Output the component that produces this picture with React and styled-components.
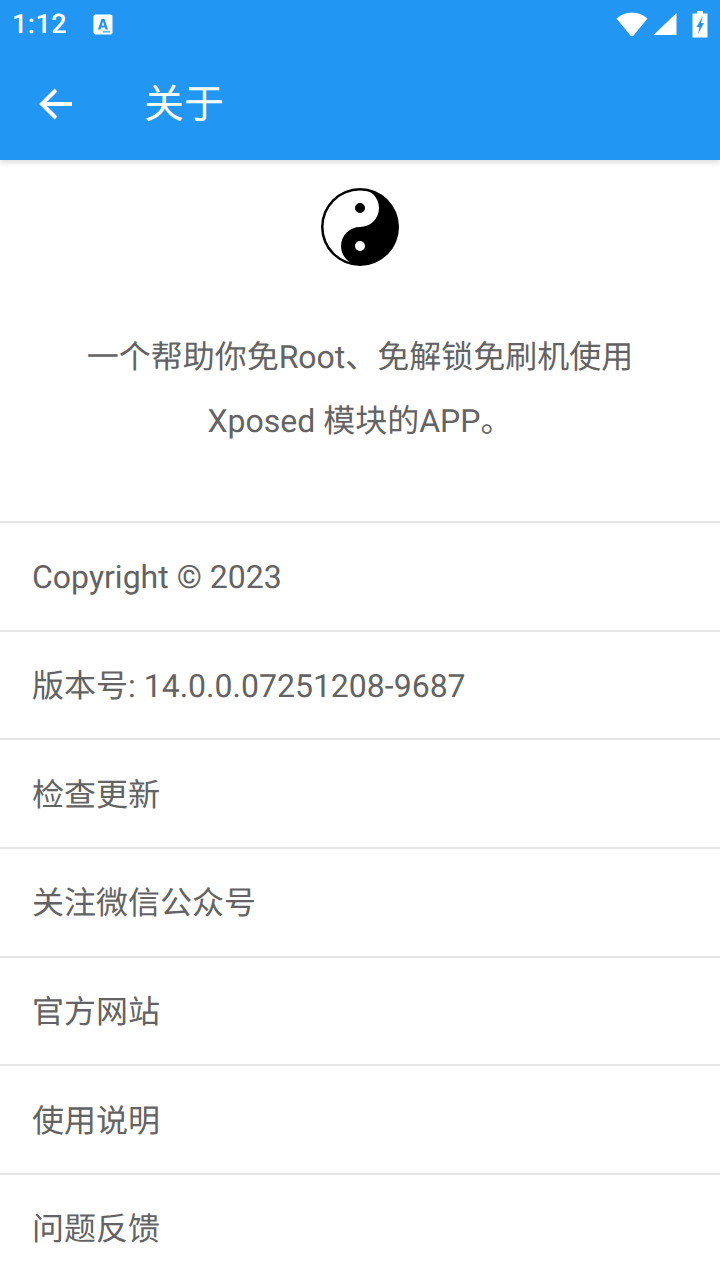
import styled, { createGlobalStyle } from "styled-components";

const GlobalStyle = createGlobalStyle`
  html, body {
    margin: 0;
    padding: 0;
    background: #fff;
    overflow: hidden;
  }
  body {
    font-family: Roboto, "Noto Sans CJK SC", sans-serif;
    text-rendering: geometricPrecision;
  }
`;

const rows = [
  "Copyright © 2023",
  "版本号: 14.0.0.07251208-9687",
  "检查更新",
  "关注微信公众号",
  "官方网站",
  "使用说明",
  "问题反馈",
];

const Page = styled.div`
  width: 720px;
  height: 1280px;
  overflow: hidden;
  background: #fff;
`;

const Header = styled.header`
  background: #2196f3;
  box-shadow: 0 2px 6px rgba(0, 0, 0, 0.16);
  position: relative;
`;

const StatusBar = styled.div`
  height: 48px;
  display: flex;
  align-items: center;
  padding: 0 12px;
  color: #fff;
`;

const Clock = styled.span`
  font-size: 27px;
  line-height: 48px;
  font-weight: 500;
  letter-spacing: 0.5px;
`;

const StatusRight = styled.div`
  margin-left: auto;
  display: flex;
  align-items: center;
`;

const Toolbar = styled.div`
  height: 112px;
  display: flex;
  align-items: center;
  color: #fff;
`;

const BackButton = styled.button`
  width: 112px;
  height: 112px;
  padding: 0;
  border: 0;
  background: none;
  display: flex;
  align-items: center;
  justify-content: center;
`;

const Title = styled.h1`
  margin: 2px 0 0 32px;
  font-size: 40px;
  line-height: 56px;
  font-weight: 400;
  color: #fff;
`;

const Intro = styled.section`
  height: 361px;
  padding-top: 27px;
  box-sizing: border-box;
  display: flex;
  flex-direction: column;
  align-items: center;
`;

const Description = styled.p`
  margin: 58px 0 0;
  width: 580px;
  font-size: 32px;
  line-height: 64px;
  color: #636363;
  text-align: center;
`;

const Row = styled.div`
  height: 108.67px;
  box-sizing: border-box;
  border-top: 2px solid #e6e6e6;
  padding: 2px 0 0 32px;
  display: flex;
  align-items: center;
  font-size: 32px;
  line-height: 40px;
  color: #636363;
`;

const NotificationIcon = () => (
  <svg width="20" height="21" viewBox="0 0 20 21" style={{ marginLeft: 26 }}>
    <rect x="0.5" y="0.5" width="19" height="20" rx="2" fill="#fff" />
    <path d="M8.4 5 H11.6 L15 15.5 H12.5 L11.9 13.5 H8.1 L7.5 15.5 H5 Z M8.7 11.4 H11.3 L10 7.5 Z" fill="#2196f3" fillRule="evenodd" />
    <rect x="10" y="16.8" width="7" height="1.8" fill="#2196f3" opacity="0.7" />
  </svg>
);

const WifiIcon = () => (
  <svg width="32" height="25" viewBox="0 0 32 25">
    <path d="M0.5 6.5 C9 -1.5 23 -1.5 31.5 6.5 L17.5 23.5 Q16 25 14.5 23.5 Z" fill="#fff" />
  </svg>
);

const SignalIcon = () => (
  <svg width="24" height="24" viewBox="0 0 24 24" style={{ marginLeft: 5 }}>
    <path d="M23.5 1 V23 H0.5 Z" fill="#fff" />
  </svg>
);

const BatteryIcon = () => (
  <svg width="16" height="27" viewBox="0 0 16 27" style={{ marginLeft: 15 }}>
    <path d="M5 0 H11 V2.5 H15.5 V26.5 H0.5 V2.5 H5 Z" fill="#fff" />
    <path d="M11 5 L4.5 16 H7.5 L6 23 L12 12 H9 Z" fill="#2196f3" />
  </svg>
);

const BackIcon = () => (
  <svg width="34" height="32" viewBox="0 0 34 32" fill="none" stroke="#fff" strokeWidth="4">
    <path d="M33 16 H3" />
    <path d="M17 2 L3 16 L17 30" />
  </svg>
);

const TaijiLogo = () => (
  <svg width="80" height="80" viewBox="0 0 80 80">
    <circle cx="40" cy="40" r="39" fill="#000" />
    <circle cx="40" cy="40" r="36.5" fill="#fff" />
    <path d="M40 2 A38 38 0 0 1 40 78 A19 19 0 0 1 40 40 A19 19 0 0 0 40 2 Z" fill="#000" />
    <circle cx="40" cy="21" r="5" fill="#000" />
    <circle cx="40" cy="59" r="5" fill="#fff" />
  </svg>
);

export default function App() {
  return (
    <Page>
      <GlobalStyle />
      <Header>
        <StatusBar>
          <Clock>1:12</Clock>
          <NotificationIcon />
          <StatusRight>
            <WifiIcon />
            <SignalIcon />
            <BatteryIcon />
          </StatusRight>
        </StatusBar>
        <Toolbar>
          <BackButton>
            <BackIcon />
          </BackButton>
          <Title>关于</Title>
        </Toolbar>
      </Header>
      <Intro>
        <TaijiLogo />
        <Description>
          一个帮助你免Root、免解锁免刷机使用
          <br />
          Xposed 模块的APP。
        </Description>
      </Intro>
      {rows.map((label) => (
        <Row key={label}>{label}</Row>
      ))}
    </Page>
  );
}
